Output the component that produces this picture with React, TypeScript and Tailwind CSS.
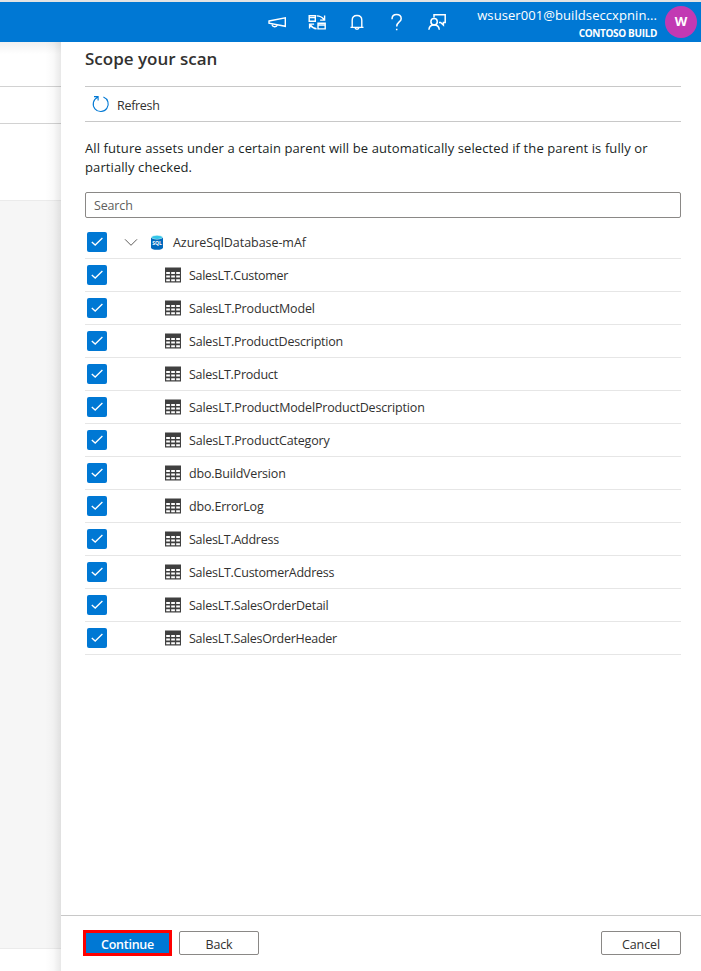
import React from "react";

const tables = [
  { name: "SalesLT.Customer", track: "tracking-[-0.29px]" },
  { name: "SalesLT.ProductModel", track: "tracking-[-0.17px]" },
  { name: "SalesLT.ProductDescription", track: "tracking-[-0.2px]" },
  { name: "SalesLT.Product", track: "tracking-[-0.25px]" },
  { name: "SalesLT.ProductModelProductDescription", track: "tracking-[-0.16px]" },
  { name: "SalesLT.ProductCategory", track: "tracking-[-0.17px]" },
  { name: "dbo.BuildVersion", track: "tracking-[-0.19px]" },
  { name: "dbo.ErrorLog", track: "tracking-[-0.18px]" },
  { name: "SalesLT.Address", track: "tracking-[-0.27px]" },
  { name: "SalesLT.CustomerAddress", track: "tracking-[-0.25px]" },
  { name: "SalesLT.SalesOrderDetail", track: "tracking-[-0.23px]" },
  { name: "SalesLT.SalesOrderHeader", track: "tracking-[-0.26px]" },
];

function Checkbox() {
  return (
    <span role="checkbox" aria-checked="true" className="ml-0.5 flex size-5 shrink-0 items-center justify-center rounded-xs bg-[#0078d4]">
      <svg width="20" height="20" viewBox="0 0 20 20" fill="none" stroke="#fff" strokeWidth="1.3">
        <path d="M4.8 9.9 8.2 13 15.4 6" />
      </svg>
    </span>
  );
}

function TableIcon() {
  return (
    <svg className="shrink-0" width="16" height="16" viewBox="0 0 16 16" fill="#404040">
      <path fillRule="evenodd" d="M0 .5H16V15.5H0ZM1.2 5V7H4.9V5ZM6.2 5V7H9.9V5ZM11.2 5V7H14.9V5ZM1.2 8.6V10.6H4.9V8.6ZM6.2 8.6V10.6H9.9V8.6ZM11.2 8.6V10.6H14.9V8.6ZM1.2 12.2V14.2H4.9V12.2ZM6.2 12.2V14.2H9.9V12.2ZM11.2 12.2V14.2H14.9V12.2Z" />
    </svg>
  );
}

function SqlIcon() {
  return (
    <svg className="shrink-0" width="12" height="15" viewBox="0 0 12 15">
      <path d="M0 2.2V12.4C0 13.7 2.7 14.8 6 14.8S12 13.7 12 12.4V2.2Z" fill="#0069bd" />
      <ellipse cx="6" cy="2.3" rx="6" ry="2.2" fill="#c5edf7" />
      <ellipse cx="6" cy="2.3" rx="5" ry="1.6" fill="#32c5e8" />
      <text x="6" y="10.4" textAnchor="middle" fontSize="5" fontWeight="700" fontFamily="Open Sans, sans-serif" fill="#fff">SQL</text>
    </svg>
  );
}

function Header() {
  return (
    <header className="flex h-[42px] shrink-0 items-center border-t-2 border-[#e3e3e3] bg-[#0078d4] text-white">
      <div className="ml-[267px] flex h-full items-center gap-5">
        <svg width="20" height="20" viewBox="0 0 20 20" fill="none" stroke="#fff" strokeWidth="1.4">
          <path d="M2 9 18.3 5.9V14.3L2 11.2ZM5.2 11.9V13.2Q5.6 14.9 7.8 14.8Q10 14.7 10.2 12.8" />
        </svg>
        <svg width="20" height="20" viewBox="0 0 20 20" fill="none" stroke="#fff" strokeWidth="1.4">
          <path d="M2.2 3.7H8.3V9.3H2.2ZM2.2 5.6H8.3M11 11.2H18.2V16.9H11ZM11 13H18.2M9.6 3.9Q14 3.8 16.8 7.2M17.6 3.6V8.1H13.1M9.6 16.7Q5.6 16.4 3.4 13M2.6 16.6V12.1H7.1" />
        </svg>
        <svg width="20" height="20" viewBox="0 0 20 20" fill="none" stroke="#fff" strokeWidth="1.4">
          <path d="M3.5 15.4H16.5M5.2 15.4V8.3Q5.2 3.5 10 3.5T14.8 8.3V15.4M8 15.5Q8.2 17.2 10 17.2T12 15.5" />
        </svg>
        <svg width="20" height="20" viewBox="0 0 20 20" fill="none" stroke="#fff" strokeWidth="1.5">
          <path d="M5 7.2Q5 2.6 9.6 2.6T14.2 6.7C14.2 10 9.7 10 9.7 14.4M9.7 16.7V18.3" />
        </svg>
        <svg width="20" height="20" viewBox="0 0 20 20" fill="none" stroke="#fff" strokeWidth="1.5">
          <path d="M7 5.5V2.7H18.2V10.5H16.4V13L13.6 10.5H12M1.9 17.8Q2.3 13 7.1 13T12.3 17.8" />
          <circle cx="7.1" cy="9.7" r="3.2" />
        </svg>
      </div>
      <div className="mt-1 mr-2 ml-auto flex flex-col items-end">
        <span className="text-[13px] leading-[17px] tracking-[0.08px]">wsuser001@buildseccxpnin...</span>
        <span className="text-[10px] leading-[18px] font-bold tracking-[-0.35px]">CONTOSO BUILD</span>
      </div>
      <div className="mr-1 flex size-8 items-center justify-center rounded-full bg-[#c239b3] text-[13px] font-bold">W</div>
    </header>
  );
}

export default function App() {
  return (
    <div className="flex h-[971px] w-[701px] flex-col overflow-hidden bg-white font-['Open_Sans','Noto_Sans',sans-serif] text-[12.5px] text-[#323130]">
      <Header />
      <div className="flex min-h-0 flex-1">
        <aside className="relative flex w-[61px] shrink-0 flex-col bg-white">
          <div className="h-[45px] border-b border-[#d2d2d2]" />
          <div className="h-[37px] border-b border-[#d2d2d2]" />
          <div className="h-[76px]" />
          <div className="flex-1 border-y border-[#ebebeb] bg-[#f6f6f6]" />
          <div className="h-[22px]" />
          <div className="absolute inset-y-0 right-0 w-4 bg-linear-to-r from-black/0 via-black/2 to-black/9" />
          <div className="absolute inset-x-0 top-0 h-3 bg-linear-to-b from-black/6 to-transparent" />
        </aside>
        <main className="flex min-w-0 flex-1 flex-col">
          <div className="flex flex-1 flex-col px-6 pr-5">
            <h1 className="h-11 pt-1 text-[17px] leading-[26px] font-semibold">Scope your scan</h1>
            <div className="flex h-9 items-center border-y border-[#c8c8c8] pl-[7px]">
              <svg width="18" height="18" viewBox="0 0 18 18" fill="none" stroke="#0078d4" strokeWidth="1.1">
                <path d="M11.4 2A7.5 7.5 0 1 1 5.6 2.2M2 1.6H6.1V5.5" />
              </svg>
              <span className="ml-[7px] pt-1 tracking-[-0.3px]">Refresh</span>
            </div>
            <p className="mt-[17px] text-[13px] leading-[19px] text-[#201f1e]">
              <span className="block tracking-[0.1px] whitespace-nowrap">All future assets under a certain parent will be automatically selected if the parent is fully or</span>
              <span className="block tracking-[0.1px] whitespace-nowrap">partially checked.</span>
            </p>
            <div className="mt-[15px] flex h-[26px] items-center rounded-xs border border-[#8a8886] px-2 pt-0.5 tracking-[-0.15px] text-[#605e5c]">Search</div>
            <ul className="mt-2">
              <li className="flex h-[33px] items-center border-b border-[#e6e6e6]">
                <Checkbox />
                <svg className="mr-[13px] ml-[17px]" width="14" height="14" viewBox="0 0 14 14" fill="none" stroke="#605e5c">
                  <path d="M1 4.3 7 10.3 13 4.3" />
                </svg>
                <SqlIcon />
                <span className="ml-2.5 pt-0.5 tracking-[-0.05px]">AzureSqlDatabase-mAf</span>
              </li>
              {tables.map((t) => (
                <li key={t.name} className="flex h-[33px] items-center border-b border-[#e6e6e6]">
                  <Checkbox />
                  <span className="ml-[58px] flex items-center gap-2">
                    <TableIcon />
                    <span className={"pt-0.5 " + t.track}>{t.name}</span>
                  </span>
                </li>
              ))}
            </ul>
          </div>
          <footer className="flex h-14 shrink-0 items-start border-t border-[#c8c8c8] pt-3.5 pr-5 pl-[22px]">
            <button className="h-[26px] w-[89px] border-3 border-[#ff0000] bg-[#0078d4] pt-px leading-[21px] font-semibold tracking-[-0.25px] text-white">Continue</button>
            <button className="mt-px ml-[7px] h-6 w-20 rounded-xs border border-[#8a8886] pt-0.5 leading-[22px] tracking-[-0.15px]">Back</button>
            <button className="mt-px ml-auto h-6 w-20 rounded-xs border border-[#8a8886] pt-0.5 leading-[22px] tracking-[-0.1px]">Cancel</button>
          </footer>
        </main>
      </div>
    </div>
  );
}
